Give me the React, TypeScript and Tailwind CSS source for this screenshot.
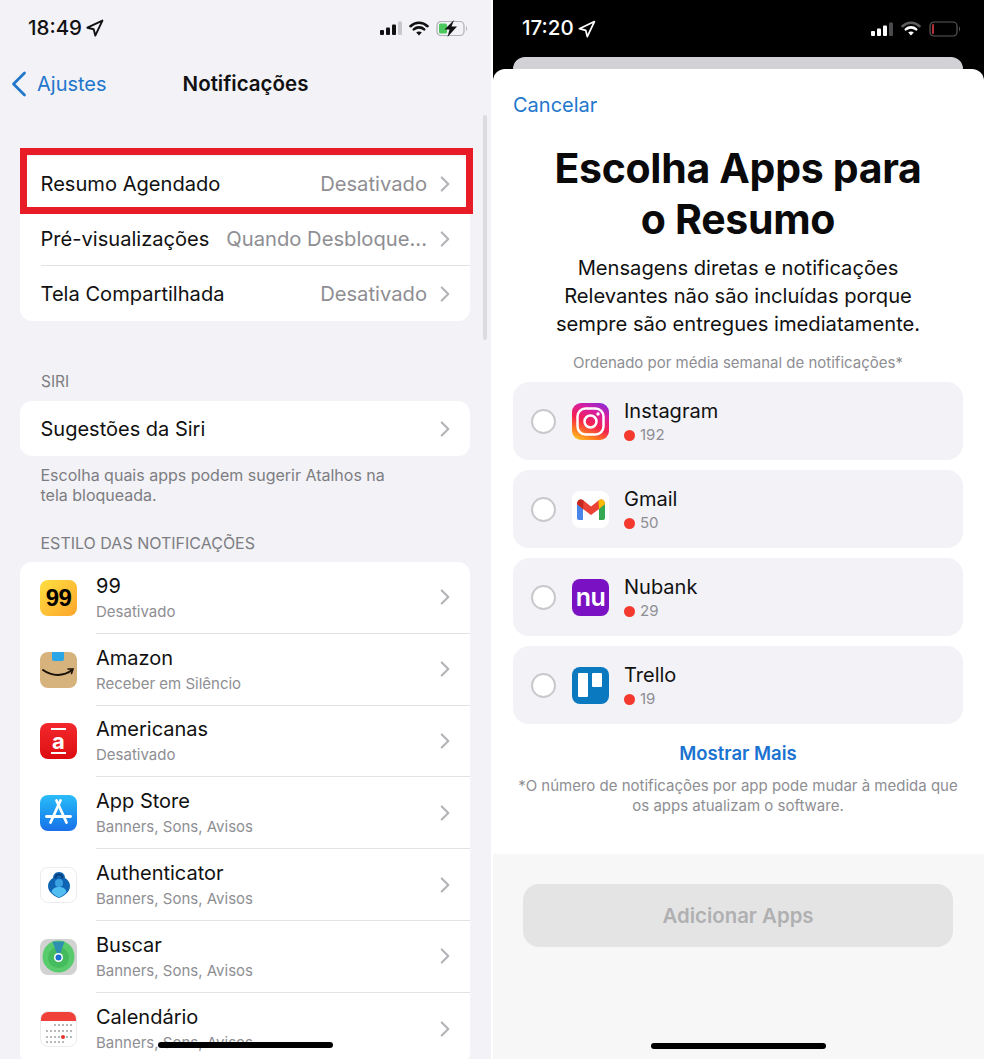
import { ChevronLeft, ChevronRight, Navigation } from "lucide-react"
import type { ReactNode } from "react"

function Signal({ color, off }: { color: string; off: string }) {
  return (
    <svg width="22" height="14" viewBox="0 0 22 14">
      <rect x="0" y="9" width="4" height="5" rx="1" fill={color} />
      <rect x="6" y="6.5" width="4" height="7.5" rx="1" fill={color} />
      <rect x="12" y="3.5" width="4" height="10.5" rx="1" fill={color} />
      <rect x="18" y="0.5" width="4" height="13.5" rx="1" fill={off} />
    </svg>
  )
}

function Wifi({ color, dim }: { color: string; dim?: string }) {
  return (
    <svg width="20" height="15" viewBox="0 0 20 15" fill="none">
      <path d="M1.5 5.2C6.3 .6 13.7 .6 18.5 5.2" stroke={dim || color} strokeWidth="2.6" strokeLinecap="round" />
      <path d="M4.8 8.4C7.7 5.7 12.3 5.7 15.2 8.4" stroke={color} strokeWidth="2.6" strokeLinecap="round" />
      <path d="M10 14.6 7.2 11.6C8.8 10.2 11.2 10.2 12.8 11.6Z" fill={color} />
    </svg>
  )
}

function ChargingBattery() {
  return (
    <svg width="32" height="17" viewBox="0 0 32 17" fill="none">
      <rect x="1" y="1.5" width="27" height="14" rx="4" stroke="#b0b0b4" strokeWidth="1.2" />
      <rect x="3" y="3.5" width="8" height="10" rx="1.5" fill="#4cc95e" />
      <path d="M30 6c1.2.4 1.2 4.600 0 5Z" fill="#a9a9ad" />
      <path d="M18 0 8.500 9.500h5l-2 7.500L21 6.500h-5.500Z" fill="#111" />
    </svg>
  )
}

function LowBattery() {
  return (
    <svg width="32" height="16" viewBox="0 0 32 16" fill="none">
      <rect x="1" y="1" width="27" height="14" rx="4" stroke="#5a5a5c" strokeWidth="1.2" />
      <rect x="3" y="3" width="2" height="10" rx="1" fill="#b5303a" />
      <path d="M30 5.5c1.2.4 1.2 4.6 0 5Z" fill="#5a5a5c" />
    </svg>
  )
}

function Tile({ className, children }: { className: string; children?: ReactNode }) {
  return (
    <div className={`flex shrink-0 items-center justify-center overflow-hidden rounded-[8px] ${className}`}>
      {children}
    </div>
  )
}

function Amazon() {
  return (
    <Tile className="relative h-[36px] w-[37px] bg-[#d6b27c]">
      <div className="absolute left-[12px] top-0 h-[9px] w-[12px] rounded-b-[2px] bg-[#2aa5e6]" />
      <svg width="37" height="36" viewBox="0 0 37 36" fill="none" className="absolute inset-0">
        <path d="M3 18c9 6.500 21 6.500 29 0" stroke="#1a1208" strokeWidth="2" strokeLinecap="round" />
        <path d="M28 17h5l-1.500 4.500" stroke="#1a1208" strokeWidth="1.600" strokeLinecap="round" />
      </svg>
    </Tile>
  )
}

function AppStore() {
  return (
    <Tile className="relative h-[36px] w-[37px] bg-gradient-to-b from-[#2cbcf8] to-[#1a70e8]">
      <svg width="37" height="36" viewBox="0 0 37 36" fill="none" stroke="#fff" strokeWidth="2.800" strokeLinecap="round" className="absolute inset-0">
        <path d="M16.500 5.500 26.500 27.500" />
        <path d="M20.500 5.500 10.500 27.500" />
        <path d="M6.500 21.500h24" />
      </svg>
    </Tile>
  )
}

function AuthIcon() {
  return (
    <Tile className="h-[36px] w-[37px] border border-[#ececf0] bg-white">
      <svg width="24" height="28" viewBox="0 0 24 28">
        <path d="M12 1c-4 0-6 3-6 6C3 9 1 11.500 1 15c0 6 6 10 11 12 5-2 11-6 11-12 0-3.500-2-6-5-8 0-3-2-6-6-6Z" fill="#0f64b4" />
        <path d="M8.500 7.500C8.500 5 10 3.500 12 3.500S15.500 5 15.500 7.500" stroke="#073f7d" strokeWidth="2" fill="none" />
        <circle cx="12" cy="12" r="4" fill="#3aa0e0" />
        <path d="M4.500 21c1-4 4-5 7.500-5s6.500 1 7.500 5c-2 2.500-5 4.500-7.500 5.500C9.500 25.500 6.500 23.500 4.500 21Z" fill="#52bdf0" />
      </svg>
    </Tile>
  )
}

function FindMy() {
  return (
    <Tile className="h-[36px] w-[37px] bg-[#d2d2d2]">
      <svg width="33" height="33" viewBox="0 0 33 33">
        <circle cx="16.500" cy="16.500" r="16" fill="#58cb6c" />
        <circle cx="16.500" cy="17.500" r="10.500" fill="#44bb5c" />
        <path d="M10.500 1.500h12L18 14h-3Z" fill="#2f8fb0" />
        <circle cx="16.500" cy="17.500" r="4.500" fill="#fff" />
        <circle cx="16.500" cy="17.500" r="3" fill="#1b6fd0" />
      </svg>
    </Tile>
  )
}

function CalendarIcon() {
  return (
    <Tile className="relative h-[36px] w-[37px] border border-[#ececf0] bg-white">
      <div className="absolute left-0 right-0 top-0 h-[9px] bg-[#f0403a]" />
      <svg width="37" height="36" viewBox="0 0 37 36" className="absolute inset-0">
        {[13, 19, 25, 30].map((y) =>
          [6, 10, 14, 18, 22, 26, 30].map((x) =>
            (y === 13 && x < 14) || (y === 30 && x > 22) ? null : (
              <circle key={`${x}-${y}`} cx={x} cy={y} r="0.700" fill="#3c3c40" />
            ),
          ),
        )}
        <circle cx="22" cy="25" r="2" fill="#e5342e" />
      </svg>
    </Tile>
  )
}

function Instagram() {
  return (
    <Tile className="relative h-[37px] w-[37px] rounded-[9px] bg-[linear-gradient(25deg,#ffd52a_0%,#ff7a1f_22%,#f5224e_45%,#d81ea0_72%,#7a2de0_100%)]">
      <svg width="37" height="37" viewBox="0 0 37 37" fill="none" stroke="#fff" strokeWidth="2.500" className="absolute inset-0">
        <rect x="5.500" y="5.500" width="26" height="26" rx="8" />
        <circle cx="18.500" cy="18.500" r="6" />
        <circle cx="26" cy="11" r="1.700" fill="#fff" stroke="none" />
      </svg>
    </Tile>
  )
}

function Gmail() {
  return (
    <Tile className="h-[37px] w-[37px] bg-white">
      <svg width="30" height="24" viewBox="0 0 30 24" fill="none">
        <path d="M1 7v14c0 1.100.9 2 2 2h4V10Z" fill="#4a86e8" />
        <path d="M29 7v14c0 1.100-.9 2-2 2h-4V10Z" fill="#34a853" />
        <path d="M1 7c0-4 3.500-6 6.500-3.500L15 9.500l7.500-6C25.500 1 29 3 29 7l-6 5-8 6-8-6Z" fill="#ea4335" />
        <path d="M1 7c0-4 3.500-6 6.500-3.500L7 12Z" fill="#c5281c" />
        <path d="M29 7c0-4-3.500-6-6.500-3.500L23 12Z" fill="#fbbc04" />
      </svg>
    </Tile>
  )
}

function Trello() {
  return (
    <Tile className="h-[37px] w-[37px] items-start justify-start gap-[4px] bg-[#0a79bf] pl-[6px] pt-[6px]">
      <div className="h-[24px] w-[10px] rounded-[1px] bg-white" />
      <div className="h-[14px] w-[10px] rounded-[1px] bg-white" />
    </Tile>
  )
}

const topRows = [
  { label: "Resumo Agendado", value: "Desativado" },
  { label: "Pré-visualizações", value: "Quando Desbloque..." },
  { label: "Tela Compartilhada", value: "Desativado" },
]

const styleRows = [
  {
    name: "99",
    sub: "Desativado",
    icon: (
      <Tile className="h-[36px] w-[37px] bg-gradient-to-br from-[#ffdf40] to-[#fba52c]">
        <span className="font-['Liberation_Sans',sans-serif] text-[24px] font-bold tracking-[-0.5px] text-black">99</span>
      </Tile>
    ),
  },
  { name: "Amazon", sub: "Receber em Silêncio", icon: <Amazon /> },
  {
    name: "Americanas",
    sub: "Desativado",
    icon: (
      <Tile className="h-[36px] w-[37px] flex-col bg-gradient-to-b from-[#f4282c] to-[#dc0a0e]">
        <div className="h-[2px] w-[15px] bg-white" />
        <span className="text-[22px] font-bold leading-[22px] text-white">a</span>
        <div className="h-[2px] w-[15px] bg-white" />
      </Tile>
    ),
  },
  { name: "App Store", sub: "Banners, Sons, Avisos", icon: <AppStore /> },
  { name: "Authenticator", sub: "Banners, Sons, Avisos", icon: <AuthIcon /> },
  { name: "Buscar", sub: "Banners, Sons, Avisos", icon: <FindMy /> },
  { name: "Calendário", sub: "Banners, Sons, Avisos", icon: <CalendarIcon /> },
]

const pickRows = [
  { name: "Instagram", count: "192", icon: <Instagram /> },
  { name: "Gmail", count: "50", icon: <Gmail /> },
  {
    name: "Nubank",
    count: "29",
    icon: (
      <Tile className="h-[37px] w-[37px] bg-[#7a12c4]">
        <span className="text-[25px] font-semibold leading-none tracking-[-0.5px] text-white">nu</span>
      </Tile>
    ),
  },
  { name: "Trello", count: "19", icon: <Trello /> },
]

function Settings() {
  return (
    <div className="relative h-[1059px] w-[491px] shrink-0 overflow-hidden bg-[#f2f2f7] text-[20px] text-[#111]">
      <div className="flex h-[56px] items-center justify-between pl-[28px] pr-[23px]">
        <div className="flex items-center gap-[3px]">
          <span className="text-[20.500px] font-medium">18:49</span>
          <Navigation className="mt-[1px] h-[19px] w-[19px]" strokeWidth={2.4} />
        </div>
        <div className="flex items-center gap-[7px]">
          <Signal color="#111" off="#c8c8cc" />
          <Wifi color="#111" />
          <ChargingBattery />
        </div>
      </div>

      <div className="relative flex h-[56px] items-center justify-center">
        <div className="absolute left-[-3px] flex items-center text-[#2277cc]">
          <ChevronLeft className="h-[44px] w-[44px]" strokeWidth={1.5} />
          <span className="ml-[-4px]">Ajustes</span>
        </div>
        <span className="text-[20.500px] font-semibold">Notificações</span>
      </div>

      <div className="px-[20px] pt-[44px]">
        <div className="w-[450px] rounded-[12px] bg-white">
          {topRows.map((r, i) => (
            <div key={r.label} className="flex h-[55px] items-center pl-[20.500px]">
              <div className={`flex h-full flex-1 items-center justify-between pr-[12px] ${i === 1 ? "border-b border-[#e3e3e6] pt-[2px]" : "pt-[1px]"}`}>
                <span className="text-[20.100px]">{r.label}</span>
                <span className="flex items-center gap-[5px] text-[20.200px] text-[#8e8e93]">
                  {r.value}
                  <ChevronRight className="h-[26px] w-[26px] text-[#b4b4b8]" strokeWidth={2} />
                </span>
              </div>
            </div>
          ))}
        </div>

        <div className="px-[21px] pb-[10px] pt-[52px] text-[15.500px] leading-[18px] text-[#7d7d82]">SIRI</div>
        <div className="flex h-[55px] w-[450px] items-center justify-between rounded-[12px] bg-white pl-[20.500px] pr-[12px]">
          <span>Sugestões da Siri</span>
          <ChevronRight className="h-[26px] w-[26px] text-[#b4b4b8]" strokeWidth={2} />
        </div>
        <p className="px-[20.500px] pt-[9px] text-[16px] leading-[20px] text-[#7d7d82]">
          Escolha quais apps podem sugerir Atalhos na
          <br />
          tela bloqueada.
        </p>

        <div className="px-[20.500px] pb-[10px] pt-[29px] text-[16px] leading-[18px] text-[#7d7d82]">ESTILO DAS NOTIFICAÇÕES</div>
        <div className="w-[450px] rounded-[12px] bg-white">
          {styleRows.map((r, i) => (
            <div key={r.name} className="flex h-[71.800px] items-center pl-[20px]">
              {r.icon}
              <div className={`ml-[19px] flex h-full flex-1 items-center justify-between pr-[12px] ${i < styleRows.length - 1 ? "border-b border-[#e3e3e6]" : ""}`}>
                <div className="flex flex-col pt-[2px]">
                  <span className="leading-[26px]">{r.name}</span>
                  <span className="text-[15px] leading-[25px] text-[#8e8e93]">{r.sub}</span>
                </div>
                <ChevronRight className="h-[26px] w-[26px] text-[#b4b4b8]" strokeWidth={2} />
              </div>
            </div>
          ))}
        </div>
      </div>

      <div className="absolute left-[20px] top-[148px] h-[66px] w-[453px] border-[7px] border-[#e81c26]" />
      <div className="absolute left-[483px] top-[115px] h-[225px] w-[4px] rounded-full bg-[#dcdce0]" />
      <div className="absolute left-[158px] top-[1042px] h-[6px] w-[175px] rounded-full bg-black" />
    </div>
  )
}

function Picker() {
  return (
    <div className="relative flex h-[1059px] w-[491px] shrink-0 flex-col overflow-hidden bg-black">
      <div className="flex h-[57px] items-center justify-between pl-[29px] pr-[23px] text-white">
        <div className="flex items-center gap-[3px]">
          <span className="text-[20.500px] font-medium">17:20</span>
          <Navigation className="mt-[1px] h-[19px] w-[19px]" strokeWidth={2.2} />
        </div>
        <div className="flex items-center gap-[8px]">
          <Signal color="#fff" off="#4a4a4c" />
          <Wifi color="#fff" dim="#5c5c5e" />
          <LowBattery />
        </div>
      </div>
      <div className="ml-[20px] mr-[21px] h-[12px] rounded-t-[12px] bg-[#d1d1d6]" />

      <div className="flex flex-1 flex-col overflow-hidden rounded-t-[12px] bg-white">
        <div className="flex flex-1 flex-col pl-[20px] pr-[21px]">
          <div className="pt-[21px] text-[20px] leading-[30px] text-[#2277cc]">Cancelar</div>
          <h1 className="pt-[23px] text-center text-[41px] font-bold leading-[51px] tracking-[-0.3px] text-[#0a0a0a]">
            Escolha Apps para
            <br />o Resumo
          </h1>
          <p className="pt-[9px] text-center text-[20.150px] leading-[28px] text-[#111]">
            Mensagens diretas e notificações
            <br />
            Relevantes não são incluídas porque
            <br />
            sempre são entregues imediatamente.
          </p>
          <div className="pt-[15px] text-center text-[15px] leading-[20px] text-[#8e8e93]">
            Ordenado por média semanal de notificações*
          </div>
          <div className="flex flex-col gap-[10px] pt-[9px]">
            {pickRows.map((r) => (
              <div key={r.name} className="flex h-[78px] items-center rounded-[16px] bg-[#f2f2f7] pl-[18px]">
                <div className="h-[25px] w-[25px] rounded-full border-2 border-[#c9c9cc] bg-white" />
                <div className="ml-[16px]">{r.icon}</div>
                <div className="ml-[15px] flex flex-col pt-[2px]">
                  <span className="text-[20px] leading-[26px] text-[#111]">{r.name}</span>
                  <span className="flex items-center gap-[5px] text-[15px] leading-[22px] text-[#8e8e93]">
                    <span className="h-[11px] w-[11px] rounded-full bg-[#f43a2f]" />
                    {r.count}
                  </span>
                </div>
              </div>
            ))}
          </div>
          <div className="pt-[17px] text-center text-[18.500px] font-semibold leading-[24px] text-[#1a73d0]">Mostrar Mais</div>
          <p className="pt-[11px] text-center text-[15px] leading-[20px] text-[#8e8e93]">
            *O número de notificações por app pode mudar à medida que
            <br />
            os apps atualizam o software.
          </p>
        </div>

        <div className="h-[205px] shrink-0 bg-[#f7f7f7] pl-[30px] pr-[31px] pt-[30px]">
          <div className="flex h-[63px] items-center justify-center rounded-[16px] bg-[#e4e4e4] pt-[1px] text-[20.400px] font-semibold text-[#b0b0b2]">
            Adicionar Apps
          </div>
        </div>
      </div>
      <div className="absolute left-[158px] top-[1043px] h-[6px] w-[175px] rounded-full bg-black" />
    </div>
  )
}

export default function App() {
  return (
    <div className="flex h-[1059px] w-[984px] justify-between overflow-hidden bg-white font-['Inter',sans-serif]">
      <Settings />
      <Picker />
    </div>
  )
}
